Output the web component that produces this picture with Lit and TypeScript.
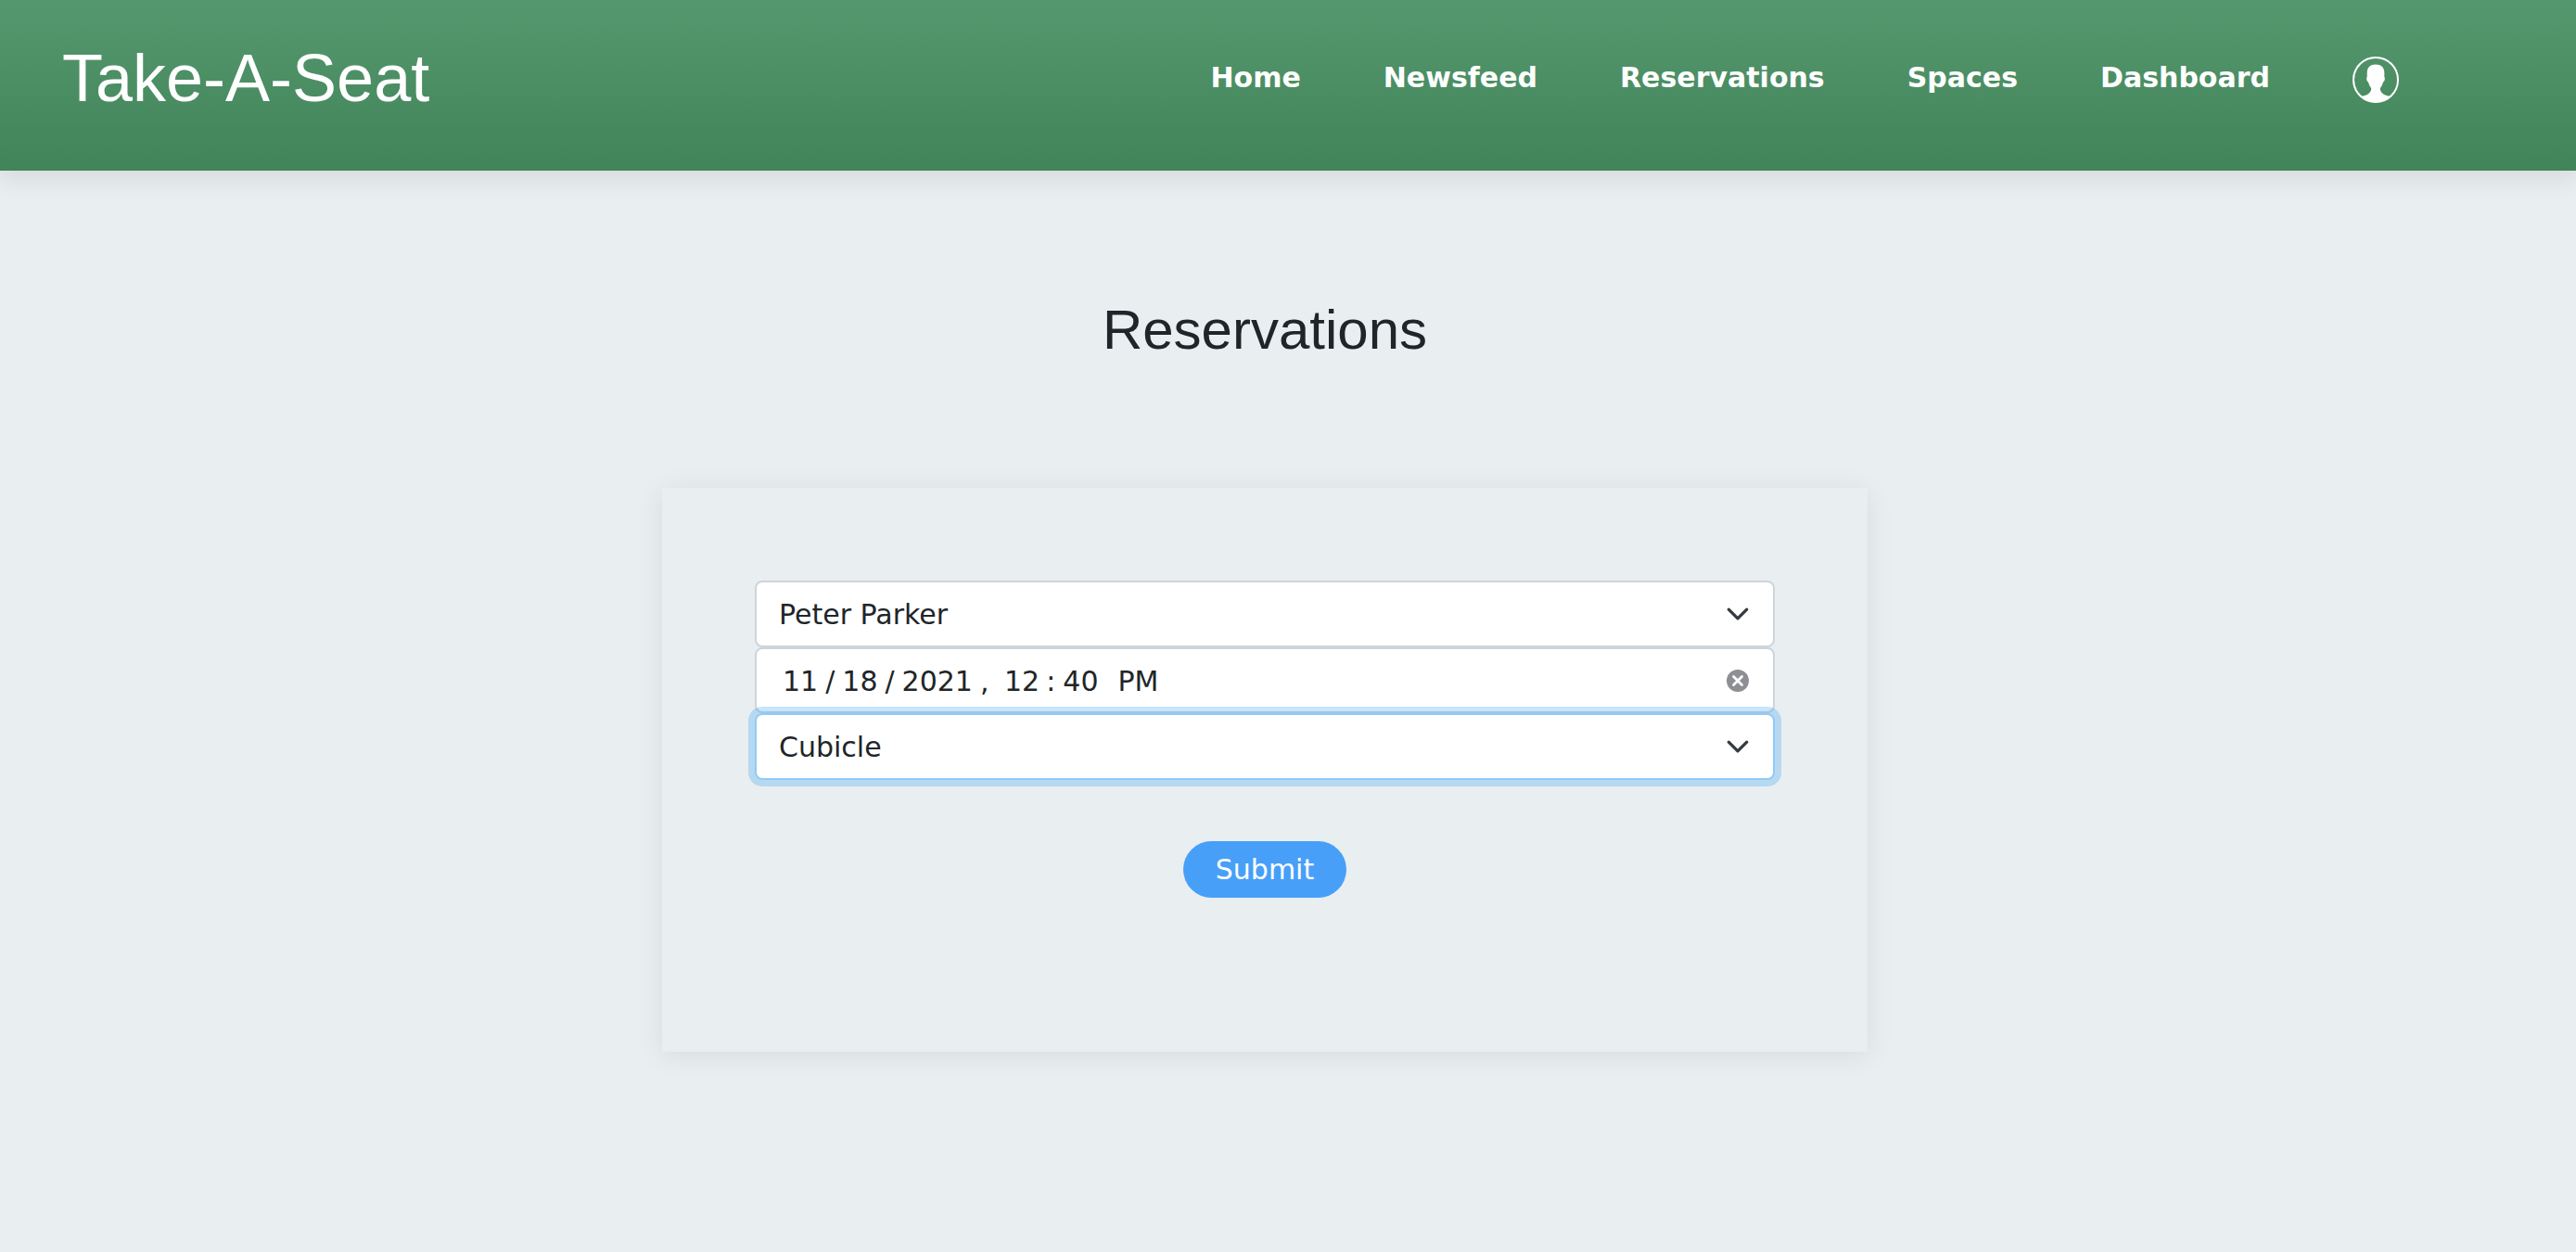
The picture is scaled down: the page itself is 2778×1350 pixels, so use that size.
import { LitElement, html, css, svg } from "lit";
import { customElement, state } from "lit/decorators.js";
import { classMap } from "lit/directives/class-map.js";

const chevron = html`<svg class="chevron" viewBox="0 0 16 16" aria-hidden="true">
  ${svg`<path d="M2 5l6 6 6-6" fill="none" stroke="#343a40" stroke-width="2" stroke-linecap="round" stroke-linejoin="round"/>`}
</svg>`;

@customElement("site-header")
export class SiteHeader extends LitElement {
  static styles = css`
    :host {
      display: block;
    }
    .bar {
      display: flex;
      justify-content: space-between;
      align-items: flex-start;
      box-sizing: border-box;
      min-height: 184px;
      padding: 44px 191px 0 67px;
      background: linear-gradient(#55986f, #428459);
      box-shadow: 0 6px 24px 4px rgba(0, 0, 0, 0.08);
    }
    .brand {
      font: 72px/80px "Liberation Sans", Arial, sans-serif;
      color: #fff;
      text-decoration: none;
    }
    .links {
      display: flex;
      align-items: center;
      gap: 89px;
      margin: 0;
      padding: 12px 0 0;
      list-style: none;
    }
    .link {
      display: block;
      font: bold 30px/50px "DejaVu Sans", Verdana, sans-serif;
      color: #fff;
      text-decoration: none;
    }
    .avatar {
      display: block;
      width: 50px;
      height: 50px;
      margin-top: 5px;
    }
  `;

  render() {
    const links = ["Home", "Newsfeed", "Reservations", "Spaces", "Dashboard"];
    return html`
      <header class="bar">
        <a class="brand" href="#home">Take-A-Seat</a>
        <nav>
          <ul class="links">
            ${links.map(
              (name) => html`<li><a class="link" href="#${name.toLowerCase()}">${name}</a></li>`
            )}
            <li>
              <a class="link" href="#profile" aria-label="Profile">
                <svg class="avatar" viewBox="0 0 50 50" aria-hidden="true">
                  <circle cx="25" cy="25" r="24" fill="none" stroke="#fff" stroke-width="2" />
                  <path
                    fill="#fff"
                    d="M25 8.500C31 8.500 34.500 12 34.300 17.500L34.300 22C35.300 22.500 34.900 27 33 27.500C32.300 30.500 31.200 32.300 29.800 34C29.800 38.500 33 42 41.500 43A24.500 24.500 0 0 1 8.500 43C17 42 20.200 38.500 20.200 34C18.800 32.300 17.700 30.500 17 27.500C15.100 27 14.700 22.500 15.700 22L15.700 17.500C15.500 12 19 8.500 25 8.500Z"
                  />
                </svg>
              </a>
            </li>
          </ul>
        </nav>
      </header>
    `;
  }
}

@customElement("reservation-form")
export class ReservationForm extends LitElement {
  @state() private active = "space";
  @state() private when = "2021-11-18T12:40";

  static styles = css`
    :host {
      display: block;
      width: 100%;
      max-width: 1300px;
    }
    .card {
      display: flex;
      flex-direction: column;
      align-items: center;
      box-sizing: border-box;
      padding: 100px 100px 166px;
      background: #e9eef1;
      box-shadow: 0 4px 28px rgba(0, 0, 0, 0.08);
    }
    .fields {
      width: 100%;
    }
    .field {
      display: grid;
      grid-template-columns: 1fr auto;
      align-items: center;
      box-sizing: border-box;
      height: 72px;
      border: 2px solid #ced4da;
      border-radius: 8px;
      background: #fff;
    }
    .field.date {
      height: 71px;
    }
    .field.active {
      border-color: #90cbf9;
      box-shadow: 0 0 0 7px rgba(33, 150, 243, 0.25);
    }
    .control {
      grid-area: 1 / 1 / 2 / 3;
      box-sizing: border-box;
      width: 100%;
      height: 100%;
      margin: 0;
      padding: 2px 24px 0;
      border: 0;
      outline: 0;
      appearance: none;
      background: none;
      font: 30px/44px "DejaVu Sans", Verdana, sans-serif;
      color: #212529;
    }
    .date .control {
      padding: 2px 64px 0 20px;
    }
    .chevron {
      grid-area: 1 / 2;
      width: 26px;
      height: 26px;
      margin-right: 25px;
      pointer-events: none;
    }
    .clear {
      grid-area: 1 / 2;
      width: 24px;
      height: 24px;
      margin-right: 26px;
      padding: 0;
      border: 0;
      background: none;
      z-index: 1;
    }
    .cross {
      display: block;
      width: 24px;
      height: 24px;
    }
    .control::-webkit-calendar-picker-indicator {
      display: none;
    }
    .control::-webkit-datetime-edit-month-field,
    .control::-webkit-datetime-edit-day-field,
    .control::-webkit-datetime-edit-year-field,
    .control::-webkit-datetime-edit-minute-field {
      padding: 0 8px;
    }
    .control::-webkit-datetime-edit-hour-field,
    .control::-webkit-datetime-edit-ampm-field {
      padding: 0 7px;
    }
    .submit {
      height: 61px;
      margin-top: 66px;
      padding: 0 35px;
      border: 0;
      border-radius: 31px;
      background: #489ff8;
      font: 30px/61px "DejaVu Sans", Verdana, sans-serif;
      color: #fff;
    }
  `;

  private field(name: string, date = false) {
    return classMap({ field: true, date, active: this.active === name });
  }

  render() {
    return html`
      <form class="card" @submit=${(e: Event) => e.preventDefault()}>
        <div class="fields">
          <div class=${this.field("person")}>
            <select class="control" aria-label="Person" @focus=${() => (this.active = "person")}>
              <option>Peter Parker</option>
            </select>
            ${chevron}
          </div>
          <div class=${this.field("when", true)}>
            <input
              class="control"
              type="datetime-local"
              aria-label="Date and time"
              .value=${this.when}
              @change=${(e: Event) => (this.when = (e.target as HTMLInputElement).value)}
              @focus=${() => (this.active = "when")}
            />
            <button class="clear" type="button" aria-label="Clear date" @click=${() => (this.when = "")}>
              <svg class="cross" viewBox="0 0 24 24" aria-hidden="true">
                <circle cx="12" cy="12" r="12" fill="#8e8f92" />
                <path d="M7.500 7.500l9 9M16.500 7.500l-9 9" stroke="#fff" stroke-width="2.800" stroke-linecap="round" />
              </svg>
            </button>
          </div>
          <div class=${this.field("space")}>
            <select class="control" aria-label="Space" @focus=${() => (this.active = "space")}>
              <option>Cubicle</option>
            </select>
            ${chevron}
          </div>
        </div>
        <button class="submit" type="submit">Submit</button>
      </form>
    `;
  }
}

@customElement("app-root")
export class AppRoot extends LitElement {
  static styles = css`
    :host {
      display: block;
      min-height: 100vh;
      background: #e9eef1;
    }
    .content {
      display: flex;
      flex-direction: column;
      align-items: center;
      padding: 136px 50px 100px 0;
    }
    .heading {
      margin: 0 0 134px;
      font: 60px/72px "Liberation Sans", Arial, sans-serif;
      color: #212529;
    }
  `;

  render() {
    return html`
      <site-header></site-header>
      <main class="content">
        <h1 class="heading">Reservations</h1>
        <reservation-form></reservation-form>
      </main>
    `;
  }
}
